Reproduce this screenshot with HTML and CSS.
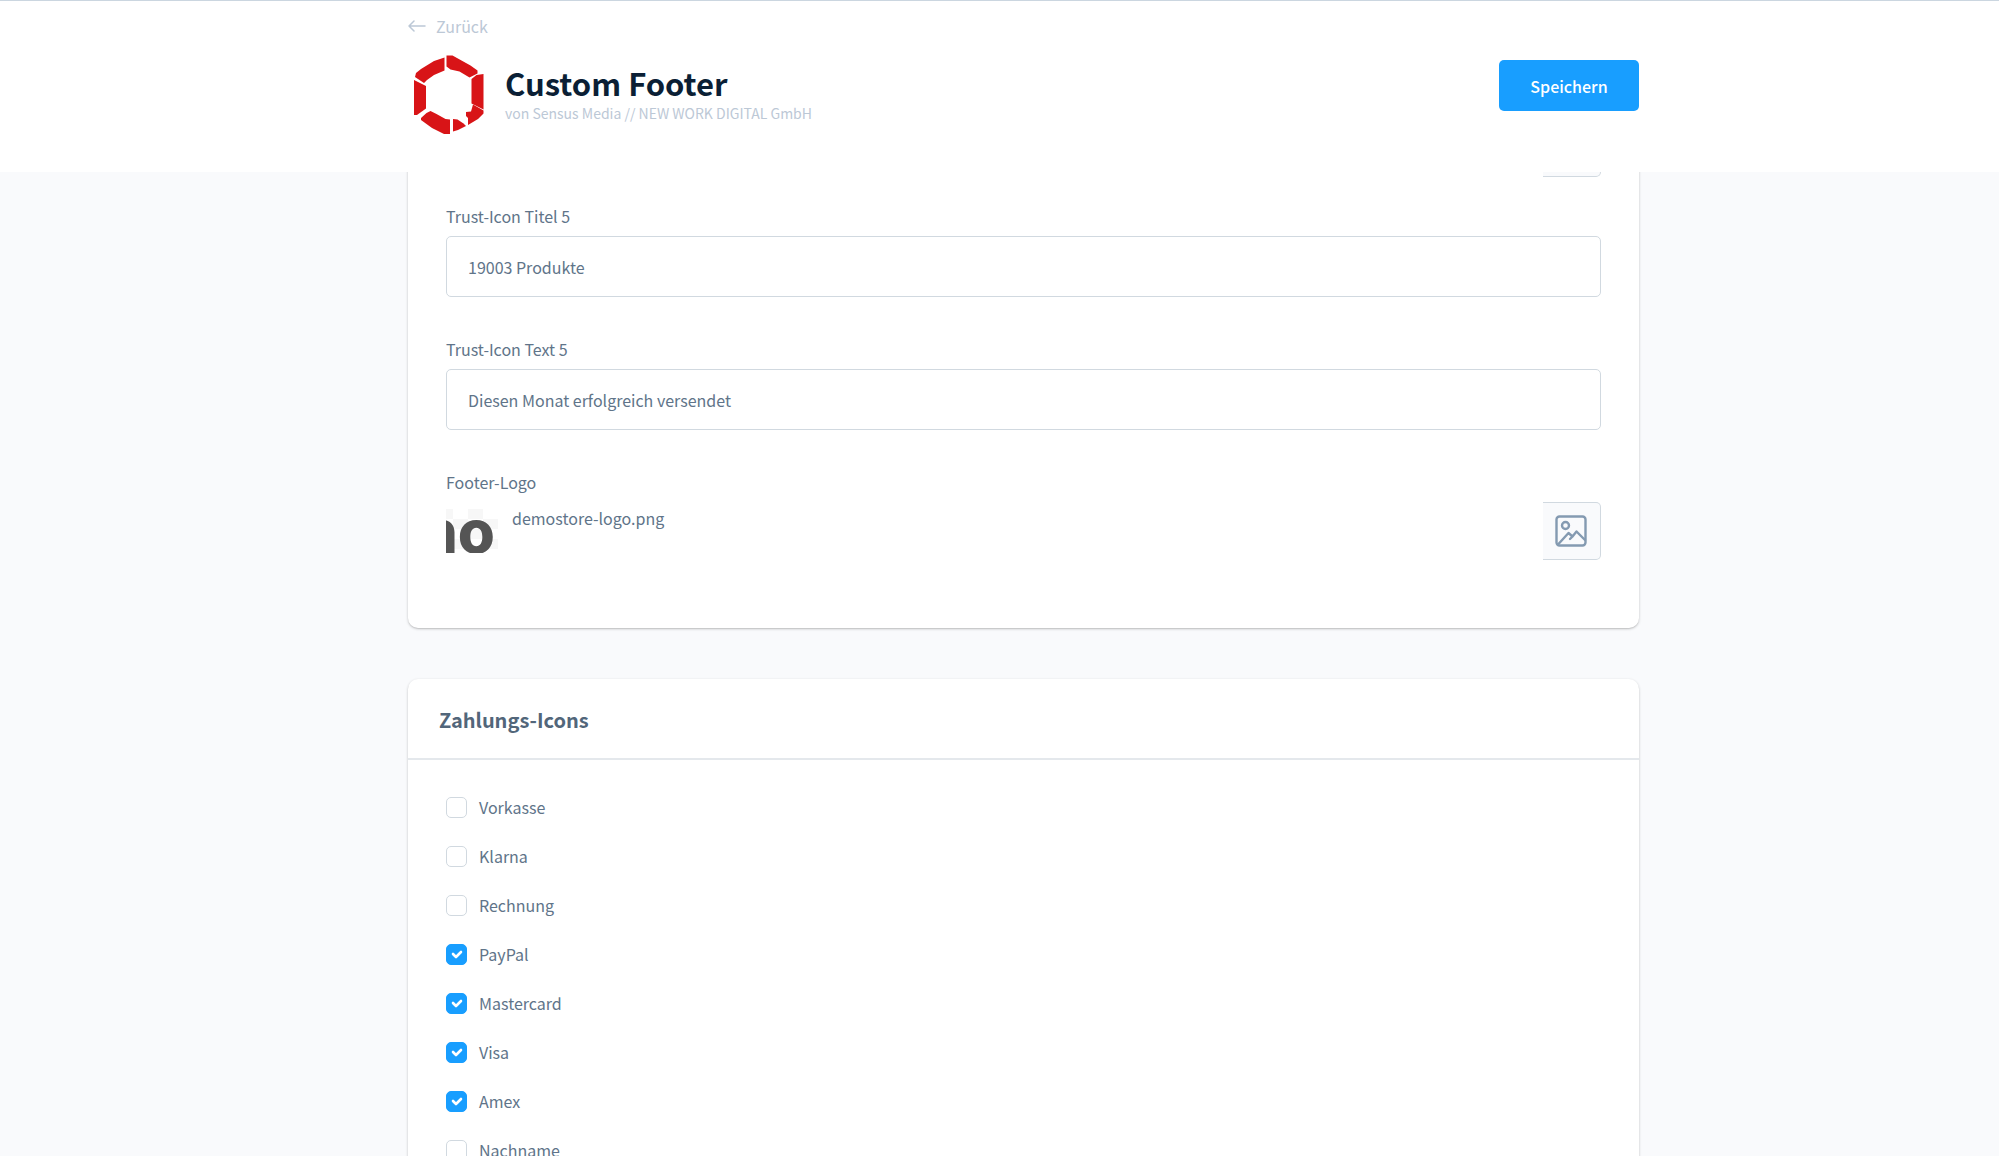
FILE: index.html
```html
<!DOCTYPE html>
<html lang="de">
<head>
    <meta charset="UTF-8">
    <meta name="viewport" content="width=device-width, initial-scale=1.0">
    <title>Custom Footer</title>
    <link rel="stylesheet" href="styles.css">
</head>
<body>

    <header class="page-header">
        <div class="container">
            <a href="#" class="back-link">
                <svg width="18" height="14" viewBox="0 0 18 14" fill="none" stroke="currentColor" stroke-width="1.5" stroke-linecap="round" stroke-linejoin="round" aria-hidden="true">
                    <path d="M17 7H1M6 2L1 7l5 5"/>
                </svg>
                Zurück
            </a>
            <div class="header-row">
                <svg class="plugin-logo" viewBox="0 0 80 80" fill="#d81417" aria-hidden="true">
                    <path d="M36.500 2.500v13L26 20l-7 5-3 3-9-6 1-4 5-4 13-8z"/>
                    <path d="M38.500 .5h6l9 5 9 5 7 5v3l-8 4-10-6-9-2-4-3z"/>
                    <path d="M75.500 19v35.500l-12-6V24l5-4z"/>
                    <path d="M6 25l12 6v22.500L9 60H6z"/>
                    <path d="M18.500 58l4-2 6 3 9 5 4.500.5v14.500h-6l-12-6-11-8v-2z"/>
                    <path d="M45 64l4.500.5 6 4 2.500 2.500-8 4-5 1.500z"/>
                    <path d="M65 49.500l10.500 6v3L70 64l-10 6v-7l-2-2v-4l5-.5z"/>
                </svg>
                <div class="plugin-info">
                    <h1>Custom Footer</h1>
                    <p>von Sensus Media // NEW WORK DIGITAL GmbH</p>
                </div>
                <button type="submit" form="config-form" class="save-btn">Speichern</button>
            </div>
        </div>
    </header>

    <main class="page-content">
        <form id="config-form" class="container">
            <section class="card card-scrolled">
                <div class="form-group media-row">
                    <button type="button" class="media-btn" aria-label="Trust-Icon 5 auswählen"></button>
                </div>

                <div class="form-group">
                    <label for="trust-title-5">Trust-Icon Titel 5</label>
                    <input type="text" id="trust-title-5" class="form-control" value="19003 Produkte">
                </div>

                <div class="form-group">
                    <label for="trust-text-5">Trust-Icon Text 5</label>
                    <input type="text" id="trust-text-5" class="form-control" value="Diesen Monat erfolgreich versendet">
                </div>

                <div class="form-group">
                    <label for="footer-logo">Footer-Logo</label>
                    <div class="media-row">
                        <div class="media-preview"><span>no</span></div>
                        <span class="media-name">demostore-logo.png</span>
                        <button type="button" id="footer-logo" class="media-btn">
                            <svg width="32" height="32" viewBox="0 0 32 32" fill="none" stroke="currentColor" stroke-width="2.4" stroke-linecap="round" stroke-linejoin="round" aria-hidden="true">
                                <rect x="1.500" y="1.500" width="29" height="29" rx="3"/>
                                <circle cx="10.500" cy="10.500" r="3.500"/>
                                <path d="M3 29.500L13.500 18l4 3.500-2.500 2.500M17.500 21.500l4-5L30 25"/>
                            </svg>
                        </button>
                    </div>
                </div>
            </section>

            <section class="card">
                <h2 class="card-title">Zahlungs-Icons</h2>
                <div class="checkbox-list">
                    <div class="checkbox"><input type="checkbox" id="vorkasse"><label for="vorkasse">Vorkasse</label></div>
                    <div class="checkbox"><input type="checkbox" id="klarna"><label for="klarna">Klarna</label></div>
                    <div class="checkbox"><input type="checkbox" id="rechnung"><label for="rechnung">Rechnung</label></div>
                    <div class="checkbox"><input type="checkbox" id="paypal" checked><label for="paypal">PayPal</label></div>
                    <div class="checkbox"><input type="checkbox" id="mastercard" checked><label for="mastercard">Mastercard</label></div>
                    <div class="checkbox"><input type="checkbox" id="visa" checked><label for="visa">Visa</label></div>
                    <div class="checkbox"><input type="checkbox" id="amex" checked><label for="amex">Amex</label></div>
                    <div class="checkbox"><input type="checkbox" id="nachname"><label for="nachname">Nachname</label></div>
                </div>
            </section>
        </form>
    </main>

</body>
</html>
```
FILE: styles.css
```css
:root {
    --blue: #189eff;
    --text: #607489;
    --heading: #52667a;
    --title: #0b1f35;
    --muted: #bcc8d6;
    --border: #d1d9e0;
    --background: #f9fafc;
    --white: #ffffff;
}

* {
    box-sizing: border-box;
}

body {
    margin: 0;
    height: 100vh;
    display: flex;
    flex-direction: column;
    overflow: hidden;
    font-family: "Noto Sans CJK SC", "Noto Sans", sans-serif;
    font-size: 16px;
    line-height: 24px;
    color: var(--text);
    background-color: var(--background);
}

.page-header,
.page-content {
    padding-left: 48px;
}

.container {
    width: 100%;
    max-width: 1231px;
    margin: 0 auto;
}

.page-header {
    position: relative;
    z-index: 1;
    flex: none;
    padding-top: 13px;
    padding-bottom: 37px;
    border-top: 1px solid #cbd6e0;
    background-color: var(--white);
}

.back-link {
    display: inline-flex;
    align-items: center;
    gap: 10px;
    color: var(--muted);
    text-decoration: none;
}

.header-row {
    display: flex;
    align-items: flex-start;
    margin-top: 17px;
}

.plugin-logo {
    width: 80px;
    height: 80px;
}

.plugin-info {
    flex: 1;
    margin-left: 17px;
    padding-top: 9px;
}

.plugin-info h1 {
    margin: 0;
    font-size: 31px;
    line-height: 37px;
    font-weight: 700;
    color: var(--title);
}

.plugin-info p {
    margin: 0;
    font-size: 14px;
    color: var(--muted);
}

.save-btn {
    width: 140px;
    height: 51px;
    margin-top: 5px;
    border: none;
    border-radius: 5px;
    font: inherit;
    font-weight: 500;
    color: var(--white);
    background-color: var(--blue);
    cursor: pointer;
}

.page-content {
    flex: 1;
    min-height: 0;
}

.card {
    margin-bottom: 51px;
    border-radius: 10px;
    background-color: var(--white);
    box-shadow: 0 1px 3px rgba(0, 0, 0, 0.2), 0 1px 1px rgba(0, 0, 0, 0.08);
}

/* upper part is scrolled behind the header */
.card-scrolled {
    margin-top: -53px;
    padding: 0 38px 68px;
}

.form-group + .form-group {
    margin-top: 40px;
}

.form-group:first-child {
    margin-bottom: -13px;
}

.form-group > label {
    display: block;
    margin-bottom: 8px;
}

.form-control {
    display: block;
    width: 100%;
    height: 61px;
    padding: 0 21px;
    border: 1px solid var(--border);
    border-radius: 5px;
    font: inherit;
    color: inherit;
    background-color: var(--white);
}

.form-control:focus {
    outline: none;
    border-color: var(--blue);
}

.media-row {
    display: flex;
    align-items: flex-start;
}

.media-preview {
    display: flex;
    justify-content: flex-end;
    width: 52px;
    height: 44px;
    margin-top: 7px;
    padding-right: 3px;
    overflow: hidden;
    background: repeating-conic-gradient(#ffffff 0 25%, #f7f7f7 0 50%) -8px 0 / 30px 20px;
    font-family: Inter, sans-serif;
    font-size: 60px;
    font-weight: 800;
    line-height: 44px;
    color: #555555;
}

.media-name {
    margin-left: 14px;
    padding-top: 4px;
}

.media-btn {
    display: flex;
    align-items: center;
    justify-content: center;
    width: 58px;
    height: 58px;
    margin-left: auto;
    padding: 0 2px 0 0;
    border: 1px solid var(--border);
    border-left: none;
    border-radius: 0 5px 5px 0;
    color: #849ab1;
    background-color: var(--background);
    cursor: pointer;
}

.card-title {
    margin: 0;
    padding: 28px 31px 25px;
    border-bottom: 2px solid #e4e8ec;
    font-size: 20px;
    line-height: 26px;
    font-weight: 700;
    color: var(--heading);
}

.checkbox-list {
    display: flex;
    flex-direction: column;
    gap: 25px;
    padding: 35px 38px;
}

.checkbox {
    display: flex;
    align-items: center;
    gap: 12px;
}

.checkbox input {
    appearance: none;
    width: 21px;
    height: 21px;
    margin: 0;
    border: 1px solid var(--border);
    border-radius: 5px;
    background-color: var(--white);
}

.checkbox input:checked {
    border-color: var(--blue);
    background: var(--blue) url("data:image/svg+xml,%3Csvg xmlns='http://www.w3.org/2000/svg' viewBox='0 0 12 12' fill='none' stroke='white' stroke-width='2.6' stroke-linecap='round' stroke-linejoin='round'%3E%3Cpath d='M2 6l3 3 5-5'/%3E%3C/svg%3E") center / 12px 12px no-repeat;
}
```
